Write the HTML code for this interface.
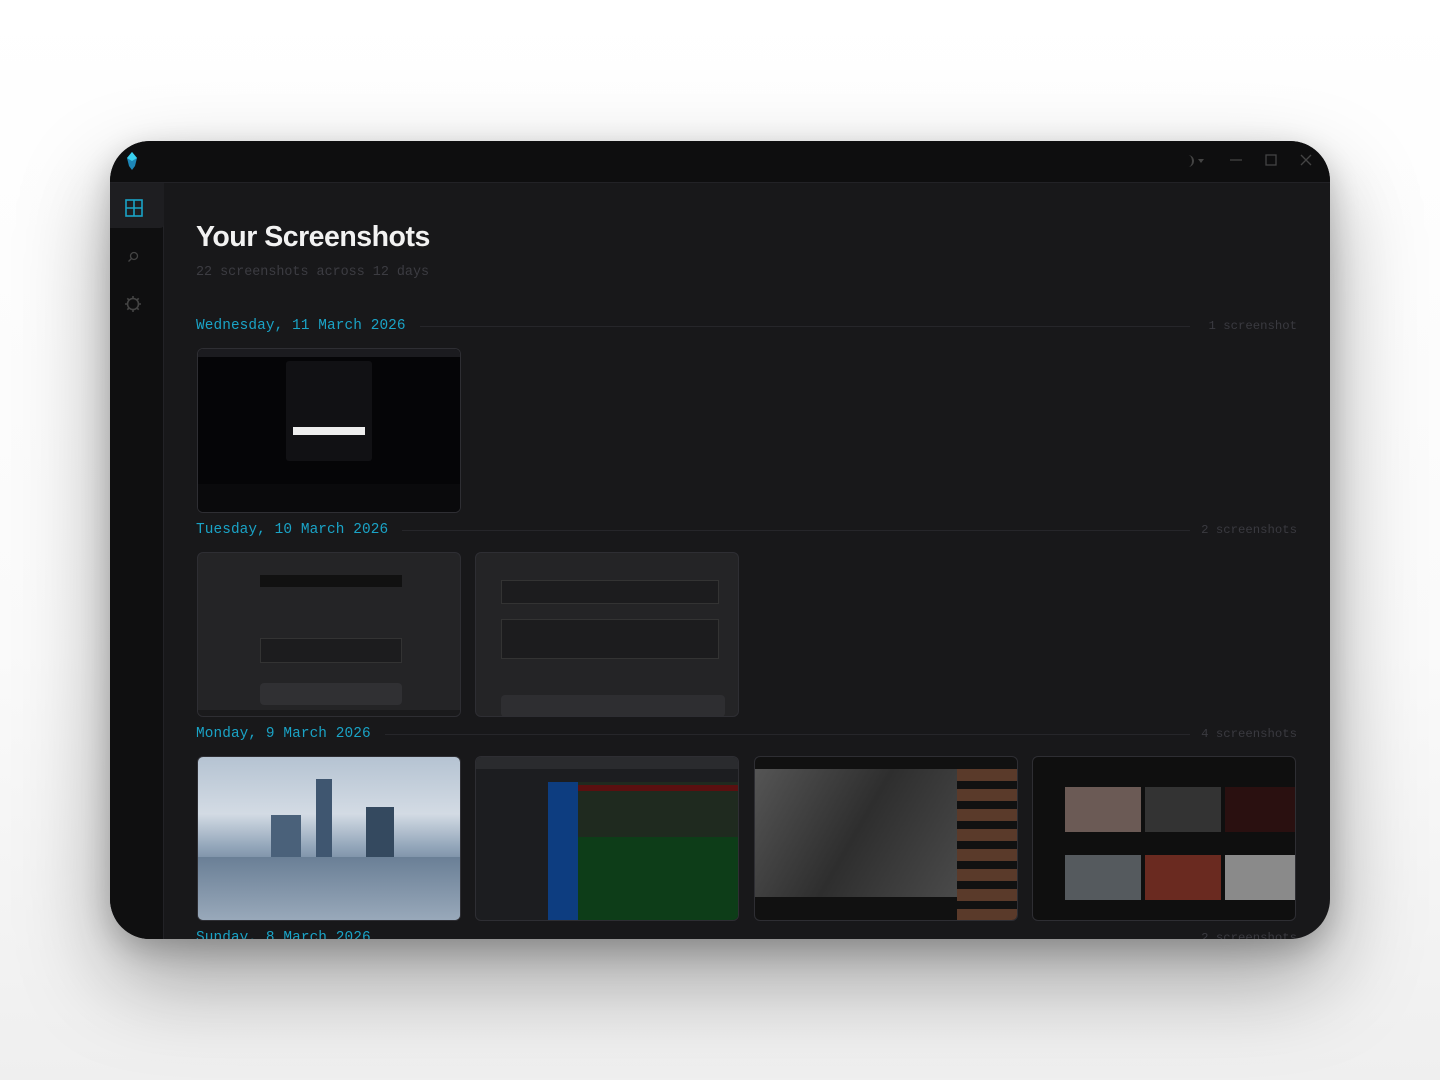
<!DOCTYPE html>
<html><head><style>
*{margin:0;padding:0;box-sizing:border-box}
body{width:1440px;height:1080px;background:linear-gradient(#fff 0%,#fafafa 60%,#efefef 100%);position:relative;overflow:hidden;font-family:"Liberation Sans",sans-serif}
.win{position:absolute;left:110px;top:141px;width:1220px;height:798px;border-radius:40px;background:#18181a;overflow:hidden;box-shadow:0 40px 90px rgba(0,0,0,.35),0 10px 30px rgba(0,0,0,.2)}
.tb{position:absolute;left:0;top:0;width:100%;height:42px;background:#0e0e0f;border-bottom:1px solid #222226}
.sb{position:absolute;left:0;top:42px;width:54px;bottom:0;background:#0f0f10;border-right:1px solid #222226}
.sel{position:absolute;left:0;top:0;width:54px;height:45px;background:#1e1e21;border-radius:0 0 4px 0}
.t{position:absolute;font-family:"Liberation Mono",monospace}
h1{position:absolute;left:86px;top:80px;font-size:28.5px;color:#f2f2f2;font-weight:700;letter-spacing:-.5px}
.sub{left:86px;top:124px;font-size:13.4px;color:#3c3c42}
.hd{font-size:14.4px;color:#1aa3c6;letter-spacing:.1px}
.ct{font-size:12.3px;color:#3a3a40;text-align:right;right:33px}
.ln{position:absolute;height:1px;background:#26262a}
.th{position:absolute;width:264px;height:165px;border-radius:6px;border:1px solid #2e2e33;overflow:hidden}
</style></head><body>
<div class="win">
<div class="tb">
<svg style="position:absolute;left:16px;top:11px" width="12" height="18" viewBox="0 0 12 18"><path d="M6 0 L11 6 L9 14 L6 18 L3 14 L1 6Z" fill="#1d86b8"/><path d="M6 0 L11 6 L6 9 L1 6Z" fill="#3ad0ee"/></svg>
<svg style="position:absolute;left:1075px;top:12px" width="130" height="16" viewBox="0 0 130 16"><path d="M3 2 A6 6 0 0 1 3 14 A4 6 0 0 0 3 2Z" fill="#444"/><path d="M13 6 L19 6 L16 10Z" fill="#444"/><path d="M45 7 H57" stroke="#444" stroke-width="1.3"/><rect x="81" y="2" width="10" height="10" fill="none" stroke="#444" stroke-width="1.3"/><path d="M116 2 L126 12 M126 2 L116 12" stroke="#444" stroke-width="1.3"/></svg>
</div>
<div class="sb"><div class="sel"></div>
<svg style="position:absolute;left:15px;top:16px" width="18" height="18" viewBox="0 0 18 18"><rect x="1" y="1" width="16" height="16" fill="none" stroke="#1aa3c6" stroke-width="1.6"/><path d="M9 1V17M1 9H17" stroke="#1aa3c6" stroke-width="1.6"/></svg>
<svg style="position:absolute;left:17px;top:68px" width="12" height="12" viewBox="0 0 12 12"><circle cx="7" cy="5" r="3.5" fill="none" stroke="#444" stroke-width="1.3"/><path d="M4.5 7.5L1.5 10.5" stroke="#444" stroke-width="1.3"/></svg>
<svg style="position:absolute;left:14px;top:112px" width="18" height="18" viewBox="0 0 18 18"><circle cx="9" cy="9" r="5.5" fill="none" stroke="#444" stroke-width="1.6"/><path d="M9 1V3.5M9 14.5V17M1 9H3.5M14.5 9H17M3.3 3.3L5 5M13 13L14.7 14.7M3.3 14.7L5 13M13 5L14.7 3.3" stroke="#444" stroke-width="1.6"/></svg>
</div>
<h1>Your Screenshots</h1>
<div class="t sub">22 screenshots across 12 days</div>

<div class="t hd" style="left:86px;top:177px">Wednesday, 11 March 2026</div>
<div class="ln" style="left:310px;right:140px;top:185px"></div>
<div class="t ct" style="top:178px">1 screenshot</div>
<div class="th" style="left:87px;top:207px;background:#050507"><div style="position:absolute;left:88px;top:12px;width:86px;height:100px;background:#111114;border-radius:3px"></div><div style="position:absolute;left:95px;top:78px;width:72px;height:8px;background:#eee"></div><div style="position:absolute;left:0;top:0;right:0;height:8px;background:#1b1b1f"></div><div style="position:absolute;left:0;top:135px;right:0;height:28px;background:#0a0a0c"></div></div>

<div class="t hd" style="left:86px;top:381px">Tuesday, 10 March 2026</div>
<div class="ln" style="left:292px;right:140px;top:389px"></div>
<div class="t ct" style="top:382px">2 screenshots</div>
<div class="th" style="left:87px;top:411px;background:#242426"><div style="position:absolute;left:62px;top:22px;width:142px;height:12px;background:#111"></div><div style="position:absolute;left:62px;top:85px;width:142px;height:25px;background:#1c1c1e;border:1px solid #333"></div><div style="position:absolute;left:62px;top:130px;width:142px;height:22px;background:#303033;border-radius:4px"></div><div style="position:absolute;left:0;bottom:0;right:0;height:6px;background:#1a1a1c"></div></div>
<div class="th" style="left:365px;top:411px;background:#242426"><div style="position:absolute;left:25px;top:27px;width:218px;height:24px;background:#1c1c1e;border:1px solid #333"></div><div style="position:absolute;left:25px;top:66px;width:218px;height:40px;background:#1c1c1e;border:1px solid #333"></div><div style="position:absolute;left:25px;top:142px;width:224px;height:22px;background:#2e2e31;border-radius:4px"></div></div>

<div class="t hd" style="left:86px;top:585px">Monday, 9 March 2026</div>
<div class="ln" style="left:275px;right:140px;top:593px"></div>
<div class="t ct" style="top:586px">4 screenshots</div>
<div class="th" style="left:87px;top:615px;background:linear-gradient(#b5c3d2 0%,#d3dbe4 35%,#93a6ba 55%,#4f6680 80%,#7f91a6 100%)"><div style="position:absolute;left:118px;top:22px;width:16px;height:100px;background:#3f5670"></div><div style="position:absolute;left:168px;top:50px;width:28px;height:70px;background:#34495f"></div><div style="position:absolute;left:73px;top:58px;width:30px;height:60px;background:#4a617a"></div><div style="position:absolute;left:0;top:100px;width:264px;height:65px;background:linear-gradient(#6a7f96,#9aaabb)"></div></div>
<div class="th" style="left:365px;top:615px;background:#1c1d20"><div style="position:absolute;left:72px;top:25px;width:190px;height:140px;background:#1f2a1f"></div><div style="position:absolute;left:72px;top:25px;width:30px;height:140px;background:#0d3d80"></div><div style="position:absolute;left:102px;top:80px;width:160px;height:85px;background:#0d3d18"></div><div style="position:absolute;left:102px;top:28px;width:160px;height:6px;background:#5a1010"></div><div style="position:absolute;left:0;top:0;right:0;height:12px;background:#2a2b2e"></div></div>
<div class="th" style="left:644px;top:615px;background:#111"><div style="position:absolute;left:0;top:12px;width:202px;height:128px;background:linear-gradient(120deg,#555 0%,#2e2e2e 50%,#4a4a4a 100%)"></div><div style="position:absolute;left:202px;top:12px;width:62px;height:153px;background:repeating-linear-gradient(#5a3a2a 0 12px,#111 12px 20px)"></div></div>
<div class="th" style="left:922px;top:615px;background:#0f0f0f"><div style="position:absolute;left:32px;top:30px;width:76px;height:45px;background:#6b5a55"></div><div style="position:absolute;left:112px;top:30px;width:76px;height:45px;background:#333"></div><div style="position:absolute;left:192px;top:30px;width:72px;height:45px;background:#2a1010"></div><div style="position:absolute;left:32px;top:98px;width:76px;height:45px;background:#555a5e"></div><div style="position:absolute;left:112px;top:98px;width:76px;height:45px;background:#6a2a20"></div><div style="position:absolute;left:192px;top:98px;width:72px;height:45px;background:#8a8a8a"></div></div>

<div class="t hd" style="left:86px;top:789px">Sunday, 8 March 2026</div>
<div class="t ct" style="top:790px">2 screenshots</div>
</div>
</body></html>
